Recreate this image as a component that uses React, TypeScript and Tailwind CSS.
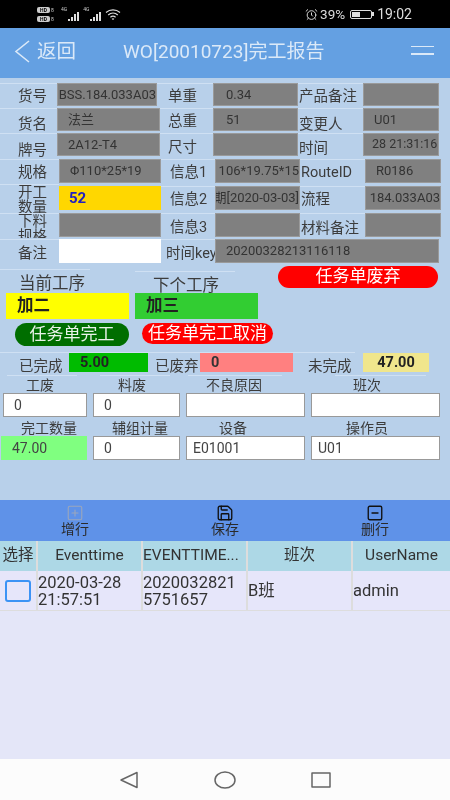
import React from 'react';
import { AlarmClock, Save, SquareMinus, SquarePlus } from 'lucide-react';

const greyBase = 'bg-[#808080] border border-[#9a9a9a] text-[#333] flex items-center whitespace-nowrap overflow-hidden';
const grey = `${greyBase} text-[13px]`;
const label = 'border-t border-[#cfe0f3] text-[#3c3c3c] text-[14.5px] leading-none flex items-center justify-start whitespace-nowrap';
const stacked = 'border-t border-[#cfe0f3] text-[#3c3c3c] text-[14.5px] leading-[15px] flex flex-col items-start whitespace-nowrap overflow-hidden self-start pl-[18px]';
const input = 'bg-white border border-[#999] text-[#444] text-[14px] flex items-center h-[24px]';
const status = 'pt-[4px] text-[14.5px] text-[#3c3c3c] leading-[20px] whitespace-nowrap';
const head = 'bg-[#add8e6] flex items-center whitespace-nowrap overflow-hidden';

const HdBadge = () => (
  <div className="flex items-center gap-[1px]">
    <span className="w-[13px] h-[6px] rounded-[2px] bg-[#ccc] text-black text-[5px] leading-[6px] font-bold text-center">HD</span>
    <span className="text-[5px] leading-[6px] text-[#ccc]">8</span>
  </div>
);

const Signal = ({ tag }: { tag: string }) => (
  <div className="flex items-end gap-[1px] h-[14px]">
    <span className="text-[5px] leading-none text-[#ccc] self-start">{tag}</span>
    <span className="w-[2px] h-[2px] bg-[#ddd]" />
    <span className="w-[2px] h-[4px] bg-[#ddd]" />
    <span className="w-[2px] h-[7px] bg-[#ddd]" />
    <span className="w-[2px] h-[9px] bg-[#ddd]" />
  </div>
);

const StatusBar = () => (
  <div className="h-[28px] shrink-0 bg-black flex items-center text-[#ddd] pl-[37px] pr-[38px]">
    <div className="flex flex-col gap-[3px] w-[21px]">
      <HdBadge />
      <HdBadge />
    </div>
    <div className="flex gap-[4px] ml-[3px]">
      <Signal tag="4G" />
      <Signal tag="4G" />
    </div>
    <svg className="ml-[4px]" width="16" height="13" viewBox="0 0 16 13" fill="none" stroke="#ddd" strokeWidth="1.2">
      <path d="M1 4.5C5 1 11 1 15 4.5" />
      <path d="M3.2 7C6 4.6 10 4.6 12.8 7" />
      <path d="M5.4 9.3C7 8 9 8 10.6 9.3" />
      <path d="M7 11.2C7.6 10.8 8.4 10.8 9 11.2" />
    </svg>
    <div className="ml-auto flex items-center text-[13.5px]">
      <AlarmClock size={13} strokeWidth={1.8} />
      <span className="ml-[2px]">39%</span>
      <div className="ml-[5px] w-[22px] h-[9px] border border-[#ddd] rounded-[2px] p-[1px]">
        <div className="w-[8px] h-full bg-[#ddd]" />
      </div>
      <span className="w-[2px] h-[4px] bg-[#ddd] mr-[3px]" />
      <span className="text-[14px]">19:02</span>
    </div>
  </div>
);

const Header = () => (
  <div className="h-[50px] shrink-0 bg-[#64a0e2] flex items-center text-[#dbe9f8]">
    <svg className="ml-[14px] mb-[4px]" width="16" height="23" viewBox="0 0 16 23" fill="none" stroke="#dbe9f8" strokeWidth="1.6">
      <path d="M15 1L2 11.5L15 22" />
    </svg>
    <span className="text-[19.5px] ml-[7px] mb-[2px]">返回</span>
    <span className="text-[19px] ml-[47px] mb-[1px] whitespace-nowrap">WO[20010723]完工报告</span>
    <div className="ml-auto mr-[16px] mb-[6px] w-[23px] flex flex-col gap-[6px]">
      <div className="h-[1.5px] bg-[#dbe9f8]" />
      <div className="h-[1.5px] bg-[#dbe9f8]" />
    </div>
  </div>
);

const Form = () => (
  <div className="h-[422px] shrink-0 bg-[#b8d0ea] pt-[5px]">
    <div className="grid grid-cols-[57px_100px_56px_85px_65px_76px] grid-rows-[23px]">
      <div className={`${label} pl-[18px] pt-[5px]`}>货号</div>
      <div className={`${grey} justify-end`}><span>BSS.184.033A03</span></div>
      <div className={`${label} pl-[11px] pt-[5px]`}>单重</div>
      <div className={`${grey} pl-[12px]`}>0.34</div>
      <div className={`${label} pl-[1px] pt-[5px]`}>产品备注</div>
      <div className={grey} />
    </div>
    <div className="grid grid-cols-[57px_103px_53px_85px_65px_76px] grid-rows-[23px] mt-[2px]">
      <div className={`${label} pl-[18px] pt-[10px]`}>货名</div>
      <div className={`${grey} pl-[10px]`}>法兰</div>
      <div className={`${label} pl-[8px] pt-[5px]`}>总重</div>
      <div className={`${grey} pl-[12px]`}>51</div>
      <div className={`${label} pl-[1px] pt-[10px]`}>变更人</div>
      <div className={`${grey} pl-[10px]`}>U01</div>
    </div>
    <div className="grid grid-cols-[57px_103px_53px_85px_65px_76px] grid-rows-[23px] mt-[2px]">
      <div className={`${label} pl-[18px] pt-[13px]`}>牌号</div>
      <div className={`${grey} pl-[10px]`}>2A12-T4</div>
      <div className={`${label} pl-[8px] pt-[7px]`}>尺寸</div>
      <div className={grey} />
      <div className={`${label} pl-[1px] pt-[9px]`}>时间</div>
      <div className={`${greyBase} pl-[8px] text-[12.5px]`}>28 21:31:16</div>
    </div>
    <div className="grid grid-cols-[59px_102px_54px_85px_65px_76px] grid-rows-[24px] mt-[3px]">
      <div className={`${label} pl-[18px] pt-[3px]`}>规格</div>
      <div className={`${grey} pl-[10px]`}>Φ110*25*19</div>
      <div className={`${label} pl-[9px] pt-[3px]`}>信息1</div>
      <div className={`${grey} justify-end`}><span>106*19.75*15</span></div>
      <div className={`${label} pl-[1px] pt-[4px]`}>RouteID</div>
      <div className={`${grey} pl-[10px]`}>R0186</div>
    </div>
    <div className="grid grid-cols-[59px_102px_54px_85px_65px_76px] grid-rows-[24px] mt-[3px]">
      <div className={`${stacked} h-[29px] -mt-[2px]`}><span>开工</span><span>数量</span></div>
      <div className="bg-[#ffd700] text-[#2020c0] text-[15px] font-bold flex items-center pl-[10px]">52</div>
      <div className={`${label} pl-[9px] pt-[4px]`}>信息2</div>
      <div className={`${grey} justify-end`}><span>期[2020-03-03]</span></div>
      <div className={`${label} pl-[1px] pt-[4px]`}>流程</div>
      <div className={`${grey} justify-end`}><span>184.033A03</span></div>
    </div>
    <div className="grid grid-cols-[59px_102px_54px_85px_65px_76px] grid-rows-[24px] mt-[3px]">
      <div className={`${stacked} h-[25px]`}><span>下料</span><span>规格</span></div>
      <div className={grey} />
      <div className={`${label} pl-[9px] pt-[5px]`}>信息3</div>
      <div className={grey} />
      <div className={`${label} pl-[1px] pt-[7px]`}>材料备注</div>
      <div className={grey} />
    </div>
    <div className="grid grid-cols-[59px_102px_54px_224px] grid-rows-[24px] mt-[2px]">
      <div className={`${label} pl-[18px] pt-[6px]`}>备注</div>
      <div className="bg-white" />
      <div className={`${label} pl-[5px] pt-[6px]`}>时间key</div>
      <div className={`${grey} pl-[10px]`}>20200328213116118</div>
    </div>

    <div className="flex mt-[3px] h-[22px]">
      <div className="w-[90px] h-[1px] mt-[3px] bg-[#cfe0f3]" />
      <div className="w-[100px] h-[1px] mt-[5px] ml-[45px] bg-[#cfe0f3]" />
      <div className="ml-auto mr-[12px] w-[160px] h-[22px] rounded-full bg-[#ff0000] text-white text-[17px] flex items-center justify-center">任务单废弃</div>
    </div>
    <div className="flex h-[16px] pl-[19px] gap-[68px] -mt-[12px] text-[#3c3c3c] text-[16.5px] leading-[16px]">
      <span>当前工序</span>
      <span className="mt-[2px]">下个工序</span>
    </div>
    <div className="flex pl-[6px] gap-[6px] mt-[1px]">
      <div className="w-[123px] h-[26px] bg-[#ffff00] text-[#222] text-[16.5px] font-bold flex items-center pl-[11px]">加二</div>
      <div className="w-[123px] h-[26px] bg-[#32cd32] text-[#222] text-[16.5px] font-bold flex items-center pl-[11px]">加三</div>
    </div>
    <div className="flex items-start pl-[15px] gap-[13px] mt-[4px] text-[17px]">
      <div className="w-[114px] h-[23px] rounded-full bg-[#006e00] text-[#e8f2e8] flex items-center justify-center">任务单完工</div>
      <div className="w-[131px] h-[21px] rounded-full bg-[#ff0000] text-white flex items-center justify-center whitespace-nowrap">任务单完工取消</div>
    </div>

    <div className="w-[355px] h-[1px] mt-[6px] bg-[#cfe0f3]" />
    <div className="flex items-start h-[19px]">
      <span className={`${status} w-[69px] pl-[19px]`}>已完成</span>
      <div className="w-[79px] h-[19px] bg-[#00bb00] text-[#222] text-[14.5px] font-bold flex items-center pl-[11px]">5.00</div>
      <span className={`${status} w-[52px] pl-[7px]`}>已废弃</span>
      <div className="w-[93px] h-[19px] bg-[#ff8080] text-[#333] text-[14.5px] font-bold flex items-center pl-[11px]">0</div>
      <span className={`${status} w-[70px] pl-[15px]`}>未完成</span>
      <div className="w-[66px] h-[19px] bg-[#f0e68c] text-[#222] text-[14.5px] font-bold flex items-center justify-center">47.00</div>
    </div>

    <div className="flex h-[1px] mt-[3px]">
      <div className="w-[70px] ml-[7px] bg-[#cfe0f3]" />
      <div className="w-[70px] ml-[23px] bg-[#cfe0f3]" />
      <div className="w-[94px] ml-[18px] bg-[#cfe0f3]" />
      <div className="w-[91px] ml-[53px] bg-[#cfe0f3]" />
    </div>
    <div className="grid grid-cols-[80px_104px_100px_166px] mt-[2px] text-[14px] text-[#3c3c3c] text-center leading-[15px]">
      <span>工废</span>
      <span>料废</span>
      <span>不良原因</span>
      <span>班次</span>
    </div>
    <div className="grid grid-cols-[84px_87px_119px_129px] gap-x-[6px] pl-[3px]">
      <div className={`${input} pl-[10px]`}>0</div>
      <div className={`${input} pl-[10px]`}>0</div>
      <div className={input} />
      <div className={input} />
    </div>
    <div className="grid grid-cols-[98px_84px_102px_166px] mt-[4px] text-[14px] text-[#3c3c3c] text-center leading-[15px]">
      <span>完工数量</span>
      <span>辅组计量</span>
      <span>设备</span>
      <span>操作员</span>
    </div>
    <div className="grid grid-cols-[86px_87px_119px_129px] gap-x-[6px] pl-[1px]">
      <div className="bg-[#80ff80] text-[#444] text-[14px] flex items-center pl-[11px] h-[24px]">47.00</div>
      <div className={`${input} pl-[10px]`}>0</div>
      <div className={`${input} pl-[6px]`}>E01001</div>
      <div className={`${input} pl-[6px]`}>U01</div>
    </div>
  </div>
);

const Toolbar = () => (
  <div className="h-[41px] shrink-0 bg-[#5f92e8] grid grid-cols-3 text-[#2a2a2a] text-[14px] leading-[15px]">
    <div className="flex flex-col items-center justify-center">
      <SquarePlus size={18} strokeWidth={1.5} className="text-[#9aa6bd]" />
      <span>增行</span>
    </div>
    <div className="flex flex-col items-center justify-center">
      <Save size={18} strokeWidth={1.8} className="text-[#111]" />
      <span>保存</span>
    </div>
    <div className="flex flex-col items-center justify-center">
      <SquareMinus size={18} strokeWidth={1.8} className="text-[#111]" />
      <span>删行</span>
    </div>
  </div>
);

const Table = () => (
  <div className="flex-1 bg-[#e4e6f8] text-[#333]">
    <div className="grid grid-cols-[36px_103px_103px_103px_97px] gap-x-[2px] h-[30px] bg-[#dddddd] text-[15.5px]">
      <div className={`${head} justify-center`}>选择</div>
      <div className={`${head} justify-center`}>Eventtime</div>
      <div className={`${head} justify-start`}>EVENTTIME...</div>
      <div className={`${head} justify-center`}>班次</div>
      <div className={`${head} justify-center`}>UserName</div>
    </div>
    <div className="grid grid-cols-[36px_103px_103px_103px_97px] gap-x-[2px] h-[40px] bg-[#dddddd] border-b border-[#dddddd] text-[16.5px] leading-[17px]">
      <div className="bg-[#e6e6fa] flex items-center justify-center">
        <div className="w-[26px] h-[22px] border-2 border-[#3b93f5] rounded-[3px]" />
      </div>
      <div className="bg-[#e6e6fa] flex items-center whitespace-nowrap"><span>2020-03-28<br />21:57:51</span></div>
      <div className="bg-[#e6e6fa] flex items-center whitespace-nowrap"><span>2020032821<br />5751657</span></div>
      <div className="bg-[#e6e6fa] flex items-center">B班</div>
      <div className="bg-[#e6e6fa] flex items-center">admin</div>
    </div>
  </div>
);

const NavBar = () => (
  <div className="h-[41px] shrink-0 bg-[#fcfcfc] flex items-center justify-center gap-[75px]">
    <svg width="20" height="18" viewBox="0 0 20 18" fill="none" stroke="#666" strokeWidth="1.5" strokeLinejoin="round">
      <path d="M18 1.5V16.5L2 9Z" />
    </svg>
    <svg width="22" height="18" viewBox="0 0 22 18" fill="none" stroke="#666" strokeWidth="1.5">
      <ellipse cx="11" cy="9" rx="10" ry="8" />
    </svg>
    <svg width="20" height="16" viewBox="0 0 20 16" fill="none" stroke="#666" strokeWidth="1.5" strokeLinejoin="round">
      <rect x="1" y="1" width="18" height="14" />
    </svg>
  </div>
);

export default function App() {
  return (
    <div className="w-[450px] h-[800px] overflow-hidden flex flex-col blur-[0.3px] font-['Roboto','Noto_Sans_CJK_SC',sans-serif]">
      <StatusBar />
      <Header />
      <Form />
      <Toolbar />
      <Table />
      <NavBar />
    </div>
  );
}
